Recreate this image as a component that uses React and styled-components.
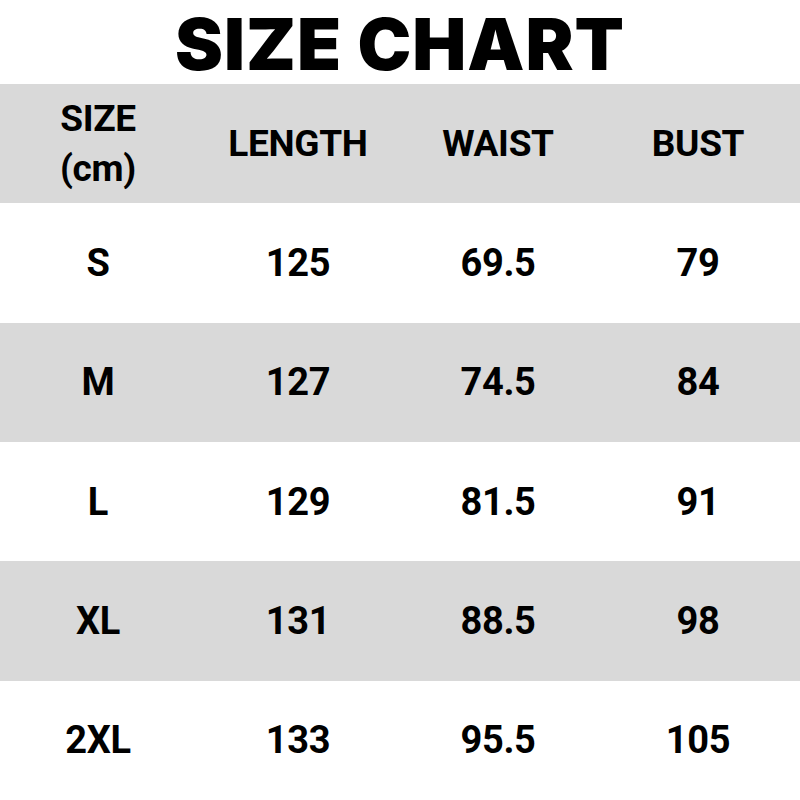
import React from 'react'
import styled, { createGlobalStyle } from 'styled-components'

const GlobalStyle = createGlobalStyle`
  html, body {
    margin: 0;
    padding: 0;
    background: #ffffff;
  }
`;

const Page = styled.div`
  width: 800px;
  height: 800px;
  display: grid;
  grid-template-rows: 84px repeat(6, 1fr);
  background: #ffffff;
  overflow: hidden;
`;

const Title = styled.h1`
  margin: 0;
  display: flex;
  align-items: center;
  justify-content: center;
  font-family: "Inter", "Liberation Sans", sans-serif;
  font-weight: 900;
  font-size: 72px;
  line-height: 1;
  letter-spacing: 1px;
  color: #000;
  padding-top: 4px;
`;

const Row = styled.div`
  display: grid;
  grid-template-columns: repeat(4, 200px);
  align-items: center;
  margin-left: -2px;
  background: ${(p) => (p.shaded ? '#d9d9d9' : '#ffffff')};
`;

const Cell = styled.div`
  text-align: center;
  font-family: "Roboto", "Liberation Sans", sans-serif;
  font-weight: 700;
  font-size: ${(p) => (p.head ? '37px' : '38px')};
  line-height: ${(p) => (p.head ? '50px' : '1')};
  letter-spacing: -0.3px;
  color: #000;
`;

const rows = [
  ['S', '125', '69.5', '79'],
  ['M', '127', '74.5', '84'],
  ['L', '129', '81.5', '91'],
  ['XL', '131', '88.5', '98'],
  ['2XL', '133', '95.5', '105'],
];

export default function App() {
  return (
    <Page>
      <GlobalStyle />
      <Title>SIZE CHART</Title>
      <Row shaded>
        <Cell head>SIZE<br />(cm)</Cell>
        <Cell head>LENGTH</Cell>
        <Cell head>WAIST</Cell>
        <Cell head>BUST</Cell>
      </Row>
      {rows.map((r, i) => (
        <Row key={r[0]} shaded={i % 2 === 1}>
          {r.map((v, j) => (
            <Cell key={j}>{v}</Cell>
          ))}
        </Row>
      ))}
    </Page>
  )
}
